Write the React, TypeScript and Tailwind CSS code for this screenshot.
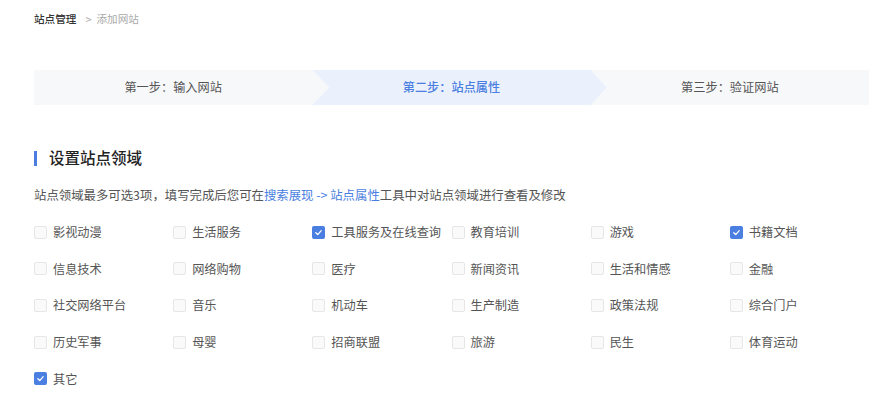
import React from "react";

const items: { label: string; checked?: boolean }[] = [
  { label: "影视动漫" },
  { label: "生活服务" },
  { label: "工具服务及在线查询", checked: true },
  { label: "教育培训" },
  { label: "游戏" },
  { label: "书籍文档", checked: true },
  { label: "信息技术" },
  { label: "网络购物" },
  { label: "医疗" },
  { label: "新闻资讯" },
  { label: "生活和情感" },
  { label: "金融" },
  { label: "社交网络平台" },
  { label: "音乐" },
  { label: "机动车" },
  { label: "生产制造" },
  { label: "政策法规" },
  { label: "综合门户" },
  { label: "历史军事" },
  { label: "母婴" },
  { label: "招商联盟" },
  { label: "旅游" },
  { label: "民生" },
  { label: "体育运动" },
  { label: "其它", checked: true },
];

function Box({ checked }: { checked?: boolean }) {
  if (checked) {
    return (
      <span className="flex h-[13px] w-[13px] shrink-0 items-center justify-center rounded-[2px] bg-[#4a7ee0]">
        <svg width="9" height="9" viewBox="0 0 10 10" fill="none">
          <path d="M2 5.2 L4.2 7.3 L8 3" stroke="#fff" strokeWidth="1.4" strokeLinecap="round" strokeLinejoin="round" />
        </svg>
      </span>
    );
  }
  return <span className="h-[13px] w-[13px] shrink-0 rounded-[2px] border border-[#e6e6e6] bg-[#fafafa]" />;
}

export default function App() {
  return (
    <div className="h-[400px] w-[884px] overflow-hidden bg-white px-[34px] pt-[10px] font-['Noto_Sans_CJK_SC',sans-serif]">
      <div className="flex h-[18px] items-center text-[10.6px] leading-[18px]">
        <span className="font-medium text-[#333]">站点管理</span>
        <span className="ml-[9px] mr-[5px] text-[11px] text-[#aaa]">&gt;</span>
        <span className="text-[#aaa]">添加网站</span>
      </div>

      <div className="mt-[42px] grid h-[35px] w-[835px] grid-cols-3 bg-[#f7f8fa] text-[12.2px]">
        <div className="flex items-center justify-center text-[#555]">第一步：输入网站</div>
        <div className="relative flex items-center justify-center">
          <div className="absolute inset-y-0 left-0 right-[-16px] bg-[#ebf1fc] [clip-path:polygon(0_0,calc(100%_-_16px)_0,100%_50%,calc(100%_-_16px)_100%,0_100%,17px_50%)]" />
          <span className="relative font-medium text-[#4a7ee0]">第二步：站点属性</span>
        </div>
        <div className="flex items-center justify-center text-[#555]">第三步：验证网站</div>
      </div>

      <div className="mt-[41px] flex h-[24px] items-center">
        <span className="h-[15px] w-[3px] bg-[#4a7ee0]" />
        <span className="ml-[12px] text-[15.5px] font-medium text-[#222]">设置站点领域</span>
      </div>

      <div className="mt-[15px] h-[20px] text-[12.4px] leading-[20px] text-[#555]">
        站点领域最多可选3项，填写完成后您可在<span className="text-[#4a7ee0]">搜索展现 -&gt; 站点属性</span>工具中对站点领域进行查看及修改
      </div>

      <div className="mt-[9px] grid w-[835px] grid-cols-6">
        {items.map((it) => (
          <div key={it.label} className="flex h-[36.6px] items-center gap-[6px] text-[12.2px] text-[#555]">
            <Box checked={it.checked} />
            <span className="whitespace-nowrap">{it.label}</span>
          </div>
        ))}
      </div>
    </div>
  );
}
